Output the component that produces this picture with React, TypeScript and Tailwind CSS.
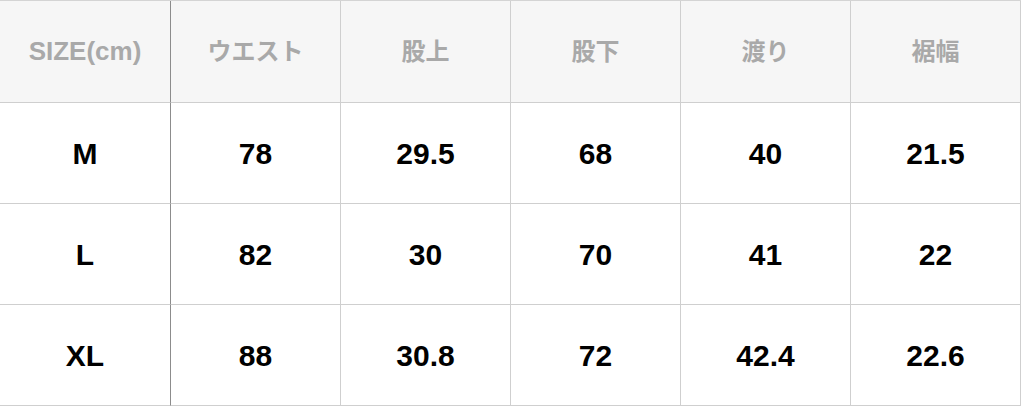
import React from "react";

const headers = ["SIZE(cm)", "ウエスト", "股上", "股下", "渡り", "裾幅"];

const rows: string[][] = [
  ["M", "78", "29.5", "68", "40", "21.5"],
  ["L", "82", "30", "70", "41", "22"],
  ["XL", "88", "30.8", "72", "42.4", "22.6"],
];

const font = {
  fontFamily: '"Liberation Sans", "Noto Sans CJK JP", sans-serif',
};

const cellBase = "flex items-center justify-center border-b border-r border-[#cfcfcf]";

const App: React.FC = () => {
  return (
    <div className="w-[1024px] h-[410px] bg-white overflow-hidden" style={font}>
      <div className="grid grid-cols-[171px_170px_170px_170px_170px_170px] w-[1021px] border-t border-[#d4d4d4]">
        {/* Header */}
        {headers.map((h, i) => (
          <div
            key={h}
            className={`${cellBase} h-[102px] bg-[#f6f6f6] font-bold text-[#a9a9a9] ${
              i === 0 ? "border-r-[#8c8c8c] text-[26px]" : "text-[24px]"
            }`}
          >
            {h}
          </div>
        ))}

        {/* Body */}
        {rows.map((row) =>
          row.map((v, i) => (
            <div
              key={row[0] + i}
              className={`${cellBase} h-[101px] bg-white text-[30px] font-bold text-black ${
                i === 0 ? "border-r-[#8c8c8c]" : ""
              }`}
            >
              {v}
            </div>
          ))
        )}
      </div>
    </div>
  );
};

export default App;
